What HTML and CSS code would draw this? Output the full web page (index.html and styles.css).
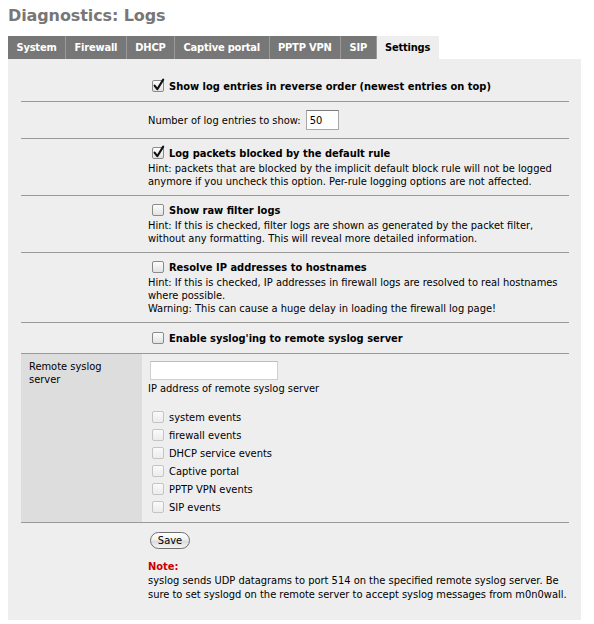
FILE: index.html
```html
<!DOCTYPE html>
<html>
<head>
<meta charset="utf-8">
<title>Diagnostics: Logs</title>
<link rel="stylesheet" href="styles.css">
</head>
<body>
<h1 class="pgtitle">Diagnostics: Logs</h1>
<nav class="tabs">
  <span class="tab">System</span><span class="tab">Firewall</span><span class="tab">DHCP</span><span class="tab">Captive portal</span><span class="tab">PPTP VPN</span><span class="tab">SIP</span><span class="tab active">Settings</span>
</nav>
<div class="panel">
  <div class="row">
    <div class="lbl"></div>
    <div class="val">
      <div class="opt"><span class="cb"><svg class="tick" width="14" height="15" viewBox="0 0 14 15"><path d="M2.6 8.6 L5.3 12.2 L11.2 2.6" /></svg></span><b>Show log entries in reverse order (newest entries on top)</b></div>
    </div>
  </div>
  <div class="row">
    <div class="lbl"></div>
    <div class="val">
      <div class="numline">Number of log entries to show:&nbsp;<input class="num" type="text" value="50"></div>
    </div>
  </div>
  <div class="row">
    <div class="lbl"></div>
    <div class="val hinted">
      <div class="opt"><span class="cb"><svg class="tick" width="14" height="15" viewBox="0 0 14 15"><path d="M2.6 8.6 L5.3 12.2 L11.2 2.6" /></svg></span><b>Log packets blocked by the default rule</b></div>
      <div class="hint">Hint: packets that are blocked by the implicit default block rule will not be logged<br>anymore if you uncheck this option. Per-rule logging options are not affected.</div>
    </div>
  </div>
  <div class="row">
    <div class="lbl"></div>
    <div class="val hinted">
      <div class="opt"><span class="cb"></span><b>Show raw filter logs</b></div>
      <div class="hint">Hint: If this is checked, filter logs are shown as generated by the packet filter,<br>without any formatting. This will reveal more detailed information.</div>
    </div>
  </div>
  <div class="row">
    <div class="lbl"></div>
    <div class="val hinted">
      <div class="opt"><span class="cb"></span><b>Resolve IP addresses to hostnames</b></div>
      <div class="hint">Hint: If this is checked, IP addresses in firewall logs are resolved to real hostnames<br>where possible.<br>Warning: This can cause a huge delay in loading the firewall log page!</div>
    </div>
  </div>
  <div class="row">
    <div class="lbl"></div>
    <div class="val">
      <div class="opt"><span class="cb"></span><b>Enable syslog'ing to remote syslog server</b></div>
    </div>
  </div>
  <div class="row">
    <div class="lbl grey">Remote syslog<br>server</div>
    <div class="val">
      <input class="ip" type="text" value="">
      <div class="iphint">IP address of remote syslog server</div>
      <div class="events">
        <div class="opt"><span class="cb off"></span>system events</div>
        <div class="opt"><span class="cb off"></span>firewall events</div>
        <div class="opt"><span class="cb off"></span>DHCP service events</div>
        <div class="opt"><span class="cb off"></span>Captive portal</div>
        <div class="opt"><span class="cb off"></span>PPTP VPN events</div>
        <div class="opt"><span class="cb off"></span>SIP events</div>
      </div>
    </div>
  </div>
  <div class="row last">
    <div class="lbl"></div>
    <div class="val">
      <button class="save" type="button">Save</button>
      <div class="note"><b class="red">Note:</b><br>syslog sends UDP datagrams to port 514 on the specified remote syslog server. Be<br>sure to set syslogd on the remote server to accept syslog messages from m0n0wall.</div>
    </div>
  </div>
</div>
</body>
</html>
```

FILE: styles.css
```css
body {
  margin: 8px;
  background: #fff;
  color: #000;
  font: 11px/13px "DejaVu Sans Condensed", "DejaVu Sans", sans-serif;
}

.pgtitle {
  margin: 0 0 12px;
  font: bold 16px/16px "DejaVu Sans", sans-serif;
  color: #777;
  letter-spacing: -0.1px;
}

.tabs {
  display: flex;
  height: 23px;
}

.tab {
  padding: 0 8.5px;
  background: #777;
  color: #fff;
  font-weight: bold;
  line-height: 23px;
  letter-spacing: -0.2px;
  border-right: 1px solid #9a9a9a;
  white-space: nowrap;
}

.tab.active {
  background: #eee;
  color: #000;
  border-right: 0;
}

.panel {
  width: 573px;
  box-sizing: border-box;
  background: #eee;
  padding: 12px 12px 12px 13px;
}

.row {
  display: grid;
  grid-template-columns: 121px 1fr;
  border-bottom: 1px solid #999;
}

.row.last {
  border-bottom: 0;
}

.lbl.grey {
  background: #ddd;
  padding: 6px 8px;
}

.val {
  padding: 6px;
  white-space: nowrap;
}

.val.hinted {
  padding: 5px 6px 7px;
}

.opt {
  display: flex;
  align-items: center;
  height: 18px;
}

.cb {
  position: relative;
  flex: none;
  width: 12px;
  height: 12px;
  box-sizing: border-box;
  margin: 0 5px 0 4px;
  border: 1px solid #8a8a8a;
  border-radius: 2px;
  background: linear-gradient(#fdfdfd, #e2e2e2);
}

.cb.off {
  border-color: #c4c4c4;
  background: linear-gradient(#fafafa, #ececec);
}

.tick {
  position: absolute;
  left: -1px;
  top: -4px;
  overflow: visible;
}

.tick path {
  fill: none;
  stroke: #111;
  stroke-width: 2.1;
  stroke-linecap: round;
  stroke-linejoin: round;
}

.hint {
  line-height: 13px;
}

.numline {
  display: flex;
  align-items: center;
  height: 24px;
}

.num {
  width: 33px;
  height: 20px;
  box-sizing: border-box;
  margin: 0 0 0 2px;
  padding: 0 3px;
  border: 1px solid #a8a8a8;
  border-top-color: #7c7c7c;
  background: #fff;
  font: 11px "DejaVu Sans Condensed", "DejaVu Sans", sans-serif;
  color: #000;
}

.ip {
  display: block;
  width: 128px;
  height: 19px;
  box-sizing: border-box;
  margin: 1px 0 0 2px;
  padding: 0 3px;
  border: 1px solid #cfcfcf;
  border-top-color: #bdbdbd;
  background: #fff;
}

.iphint {
  line-height: 18px;
}

.events {
  margin-top: 10px;
}

.save {
  display: block;
  width: 40px;
  height: 17px;
  margin: 3px 0 0 2px;
  padding: 0;
  border: 1px solid #6f6f6f;
  border-radius: 9px;
  background: linear-gradient(#ffffff, #f1f1f1 45%, #dcdcdc 55%, #f4f4f4);
  font: 11px/15px "DejaVu Sans Condensed", "DejaVu Sans", sans-serif;
  color: #000;
}

.note {
  margin-top: 11px;
  line-height: 14px;
}

.red {
  color: #c00;
}
```
